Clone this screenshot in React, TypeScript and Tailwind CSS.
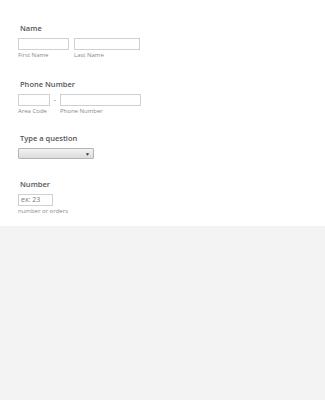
const font = { fontFamily: '"Open Sans", "Liberation Sans", sans-serif' };

function Label({ children }: { children: React.ReactNode }) {
  return <div className="pl-[20px] text-[7.5px] leading-[10px] font-semibold text-[#555]">{children}</div>;
}

function Sub({ children, className = "" }: { children: React.ReactNode; className?: string }) {
  return <div className={`text-[6px] leading-[8px] text-[#8a8a8a] mt-[1px] ${className}`}>{children}</div>;
}

function Box({ w, children }: { w: string; children?: React.ReactNode }) {
  return (
    <div className={`${w} h-[12px] border border-[#d0d0d0] bg-white text-[7px] leading-[10px] text-[#777] pl-[2px]`}>
      {children}
    </div>
  );
}

export default function App() {
  return (
    <div className="w-[325px] h-[400px] bg-[#f3f3f3]" style={font}>
      <div className="bg-white h-[226px] pt-[23px]">
        <Label>Name</Label>
        <div className="flex gap-[5px] pl-[18px] mt-[5px]">
          <div>
            <Box w="w-[51px]" />
            <Sub>First Name</Sub>
          </div>
          <div>
            <Box w="w-[66px]" />
            <Sub>Last Name</Sub>
          </div>
        </div>

        <div className="mt-[20px]">
          <Label>Phone Number</Label>
          <div className="flex items-start pl-[18px] mt-[5px]">
            <div>
              <Box w="w-[32px]" />
              <Sub>Area Code</Sub>
            </div>
            <div className="w-[10px] text-center text-[7px] leading-[12px] text-[#777]">-</div>
            <div>
              <Box w="w-[81px]" />
              <Sub>Phone Number</Sub>
            </div>
          </div>
        </div>

        <div className="mt-[18px]">
          <Label>Type a question</Label>
          <div className="pl-[18px] mt-[5px]">
            <div className="relative w-[76px] h-[11px] border border-[#b5b5b5] rounded-[1px] bg-gradient-to-b from-[#f2f2f2] to-[#dcdcdc]">
              <span className="absolute right-[3px] top-[1px] text-[5px] leading-[8px] text-[#333]">▼</span>
            </div>
          </div>
        </div>

        <div className="mt-[20px]">
          <Label>Number</Label>
          <div className="pl-[18px] mt-[5px]">
            <Box w="w-[35px]">ex: 23</Box>
            <Sub>number or orders</Sub>
          </div>
        </div>
      </div>
    </div>
  );
}
